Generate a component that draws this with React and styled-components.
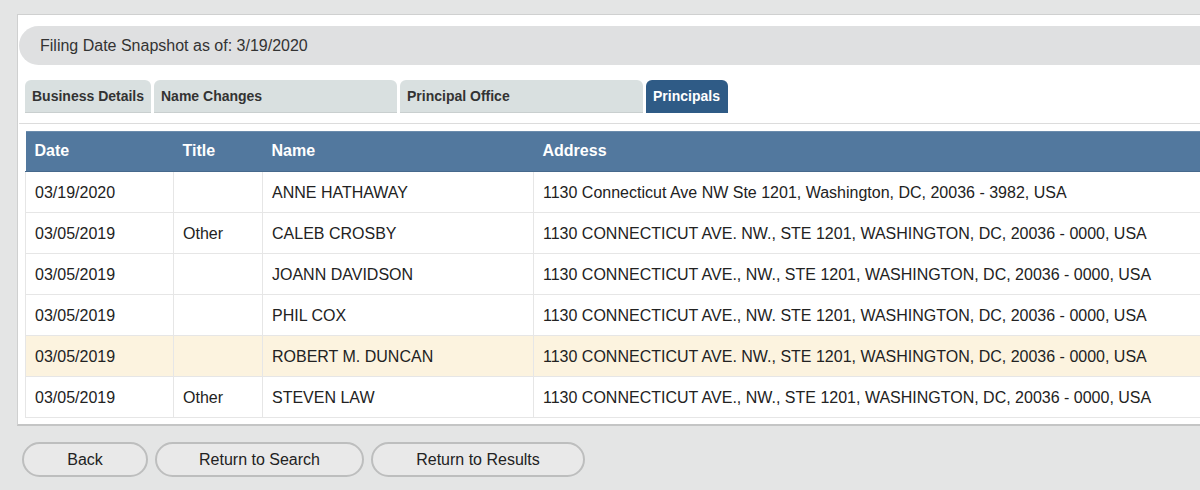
import React from 'react';
import styled, { createGlobalStyle } from 'styled-components';

const GlobalStyle = createGlobalStyle`
  body {
    margin: 0;
    background: #e4e5e5;
    font-family: "Liberation Sans", Arial, sans-serif;
    color: #222;
  }
`;

const tabs = [
  { label: 'Business Details', width: 126 },
  { label: 'Name Changes', width: 243 },
  { label: 'Principal Office', width: 243 },
  { label: 'Principals', width: 82, active: true },
];

const principals = [
  { date: '03/19/2020', title: '', name: 'ANNE HATHAWAY', address: '1130 Connecticut Ave NW Ste 1201, Washington, DC, 20036 - 3982, USA' },
  { date: '03/05/2019', title: 'Other', name: 'CALEB CROSBY', address: '1130 CONNECTICUT AVE. NW., STE 1201, WASHINGTON, DC, 20036 - 0000, USA' },
  { date: '03/05/2019', title: '', name: 'JOANN DAVIDSON', address: '1130 CONNECTICUT AVE., NW., STE 1201, WASHINGTON, DC, 20036 - 0000, USA' },
  { date: '03/05/2019', title: '', name: 'PHIL COX', address: '1130 CONNECTICUT AVE., NW. STE 1201, WASHINGTON, DC, 20036 - 0000, USA' },
  { date: '03/05/2019', title: '', name: 'ROBERT M. DUNCAN', address: '1130 CONNECTICUT AVE. NW., STE 1201, WASHINGTON, DC, 20036 - 0000, USA', highlight: true },
  { date: '03/05/2019', title: 'Other', name: 'STEVEN LAW', address: '1130 CONNECTICUT AVE., NW., STE 1201, WASHINGTON, DC, 20036 - 0000, USA' },
];

const buttons = [
  { label: 'Back', width: 126 },
  { label: 'Return to Search', width: 209 },
  { label: 'Return to Results', width: 214 },
];

const App = () => {
  return (
    <Page>
      <GlobalStyle />
      <Panel>
        <SnapshotBar>Filing Date Snapshot as of: 3/19/2020</SnapshotBar>

        <TabRow>
          {tabs.map(tab => (
            <Tab key={tab.label} $width={tab.width} $active={tab.active}>
              {tab.label}
            </Tab>
          ))}
        </TabRow>

        <Table>
          <colgroup>
            <col style={{ width: 148 }} />
            <col style={{ width: 89 }} />
            <col style={{ width: 271 }} />
            <col />
          </colgroup>
          <thead>
            <tr>
              <HeadCell>Date</HeadCell>
              <HeadCell>Title</HeadCell>
              <HeadCell>Name</HeadCell>
              <HeadCell>Address</HeadCell>
            </tr>
          </thead>
          <tbody>
            {principals.map((p, i) => (
              <Row key={i} $highlight={p.highlight}>
                <Cell>{p.date}</Cell>
                <Cell>{p.title}</Cell>
                <Cell>{p.name}</Cell>
                <Cell>{p.address}</Cell>
              </Row>
            ))}
          </tbody>
        </Table>
      </Panel>

      <ButtonRow>
        {buttons.map(b => (
          <PillButton key={b.label} $width={b.width}>{b.label}</PillButton>
        ))}
      </ButtonRow>
    </Page>
  );
};

// Styled Components
const Page = styled.div`
  width: 1200px;
  height: 490px;
  overflow: hidden;
  padding: 14px 0 0 17px;
  box-sizing: border-box;
`;

const Panel = styled.div`
  width: 1220px;
  background: #fff;
  border: 1px solid #cfd0d0;
  border-bottom: 2px solid #c4c5c5;
  padding: 11px 0 6px 1px;
  box-sizing: border-box;
`;

const SnapshotBar = styled.div`
  height: 39px;
  display: flex;
  align-items: center;
  padding-left: 21px;
  background: #dfe0e1;
  border-radius: 20px 0 0 20px;
  font-size: 16px;
  color: #333;
`;

const TabRow = styled.div`
  display: flex;
  gap: 3px;
  margin-top: 15px;
  padding: 0 0 10px 6px;
  border-bottom: 1px solid #dcdcdc;
`;

const Tab = styled.div`
  width: ${props => props.$width}px;
  height: 33px;
  box-sizing: border-box;
  display: flex;
  align-items: center;
  padding-left: 7px;
  border-radius: 6px 6px 0 0;
  background: ${props => (props.$active ? '#2f5b86' : '#d9e0e0')};
  color: ${props => (props.$active ? '#fff' : '#333')};
  border-bottom: 1px solid ${props => (props.$active ? '#2f5b86' : '#c9cfcf')};
  font-size: 14px;
  font-weight: bold;
`;

const Table = styled.table`
  margin: 7px 0 0 6px;
  width: 1200px;
  border-collapse: collapse;
  table-layout: fixed;
  font-size: 16px;
`;

const HeadCell = styled.th`
  height: 40px;
  background: #52789e;
  color: #fff;
  text-align: left;
  font-weight: bold;
  padding: 0 0 0 9px;
  border-bottom: 1px solid #46698c;
  box-shadow: inset 0 1px 0 #6b8cad;
`;

const Row = styled.tr`
  background: ${props => (props.$highlight ? '#fcf3df' : '#fff')};
`;

const Cell = styled.td`
  height: 41px;
  box-sizing: border-box;
  padding: 2px 0 0 9px;
  border: 1px solid #e6e6e6;
  border-top: none;
  color: #222;
  white-space: nowrap;
`;

const ButtonRow = styled.div`
  display: flex;
  gap: 7px;
  margin: 16px 0 0 5px;
`;

const PillButton = styled.button`
  width: ${props => props.$width}px;
  height: 35px;
  border: 2px solid #bdbebe;
  border-radius: 18px;
  background: #e9e9e9;
  font-family: "Liberation Sans", Arial, sans-serif;
  font-size: 16px;
  color: #222;
  cursor: pointer;
`;

export default App;
